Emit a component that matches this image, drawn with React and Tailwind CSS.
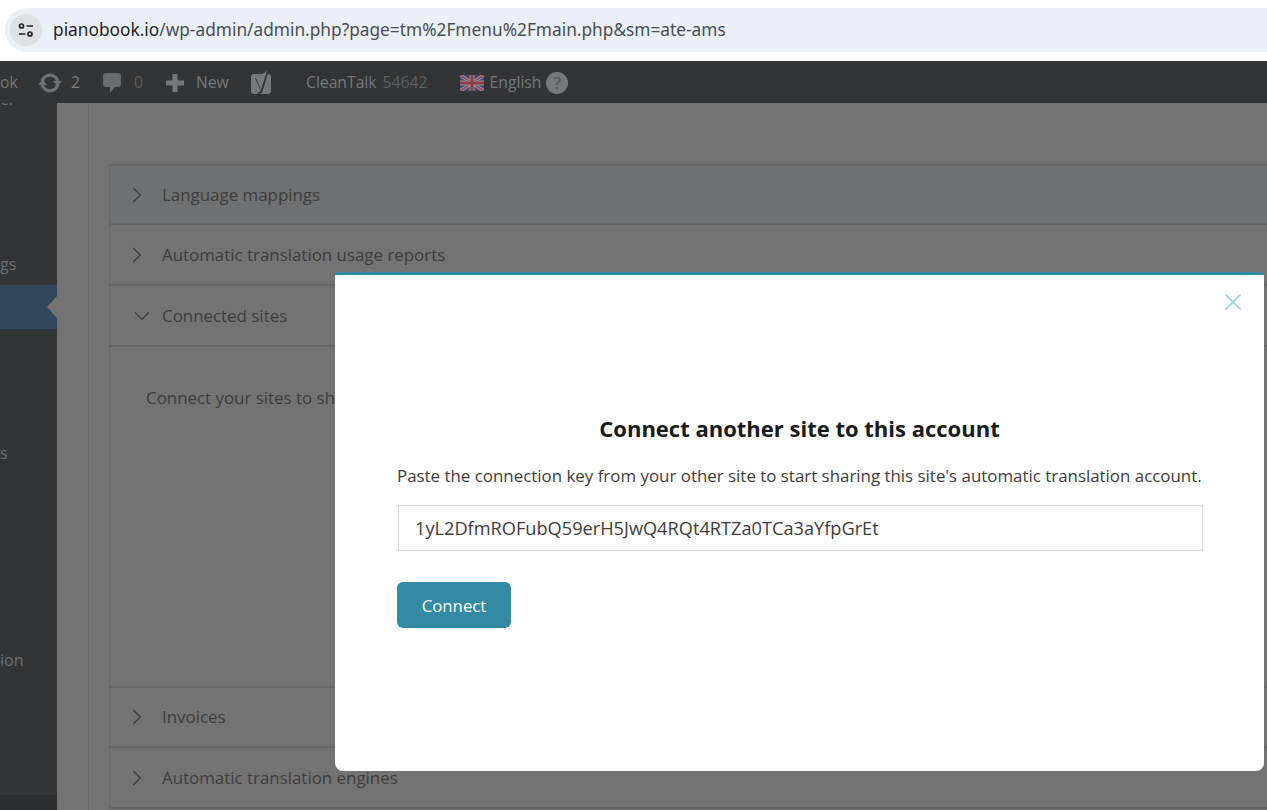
import React from 'react';
import { ChevronRight, ChevronDown, X } from 'lucide-react';

const font = "font-['Open_Sans',sans-serif]";

const SidebarItem = ({ label, className = '' }) => (
  <div className={`flex items-center overflow-hidden whitespace-nowrap text-[16px] text-[#6d6e70] ${className}`}>
    {label}
  </div>
);

const AccordionRow = ({ label, open, className = '' }) => (
  <div className={`flex items-center border-b-2 border-[#676767] text-[16.9px] text-[#3d3d3d] ${className}`}>
    <div className={`flex w-[52px] justify-start ${open ? 'pl-[19px]' : 'pl-[14px]'}`}>
      {open ? (
        <ChevronDown className="h-[26px] w-[26px] text-[#3f3f3f]" strokeWidth={1.2} />
      ) : (
        <ChevronRight className="h-[26px] w-[26px] text-[#3f3f3f]" strokeWidth={1.2} />
      )}
    </div>
    <span>{label}</span>
  </div>
);

const Flag = () => (
  <svg width="24" height="16" viewBox="0 0 24 16" className="mr-[6px]">
    <rect width="24" height="16" fill="#3f4a6b" />
    <path d="M0 0L24 16M24 0L0 16" stroke="#9a8f96" strokeWidth="3.4" />
    <path d="M0 0L24 16M24 0L0 16" stroke="#8c3f4c" strokeWidth="1.2" />
    <path d="M12 0V16M0 8H24" stroke="#9a8f96" strokeWidth="5" />
    <path d="M12 0V16M0 8H24" stroke="#8c3f4c" strokeWidth="3" />
  </svg>
);

const Refresh = () => (
  <svg width="24" height="20" viewBox="0 0 24 20" fill="none" stroke="#6f7072" strokeWidth="3.4">
    <path d="M4.300 8A8 8 0 0 1 19.700 8" />
    <path d="M19.700 12A8 8 0 0 1 4.300 12" />
    <path d="M15 8h9l-4.500 5.500z" fill="#6f7072" stroke="none" />
    <path d="M0 12h9L4.500 6.500z" fill="#6f7072" stroke="none" />
  </svg>
);

const Bubble = () => (
  <svg width="20" height="22" viewBox="0 0 20 22" fill="#6a6b6d">
    <path d="M4 1h12a3 3 0 0 1 3 3v8a3 3 0 0 1-3 3h-3l-5 6v-6H4a3 3 0 0 1-3-3V4a3 3 0 0 1 3-3z" />
  </svg>
);

const PlusIcon = () => (
  <svg width="20" height="20" viewBox="0 0 20 20" fill="#77787a">
    <path d="M7.500 1h5v6.500H19v5h-6.500V19h-5v-6.500H1v-5h6.500z" />
  </svg>
);

const Yoast = () => (
  <svg width="24" height="26" viewBox="0 0 24 26">
    <rect x="1" y="4" width="20" height="20" rx="3" fill="#77787a" />
    <path d="M16 0l3 0-7 23-5 2 1-3 2-3-5-11h4l3 7z" fill="#333435" />
    <path d="M17 1l-6.500 20-3 2.500 1-3 2-2.500L6 8" fill="#77787a" />
  </svg>
);

const SiteSettingsIcon = () => (
  <svg width="18" height="18" viewBox="0 0 18 18" fill="none" stroke="#1f2328" strokeWidth="1.7">
    <circle cx="4.500" cy="5" r="2" />
    <path d="M9.500 5H16M2 13h6.500" />
    <circle cx="13" cy="13" r="2" />
  </svg>
);

export default function App() {
  return (
    <div className={`relative h-[810px] w-[1267px] overflow-hidden bg-[#737373] ${font}`}>
      {/* Browser chrome */}
      <div className="flex h-[61px] items-start bg-white pl-[5px] pt-[8px]">
        <div className="flex h-[44px] flex-1 items-center rounded-l-[22px] bg-[#ebf0f9] pl-[5px] font-['Noto_Sans',sans-serif] text-[17.3px] text-[#4a4e53]">
          <div className="mr-[11px] flex h-[32px] w-[32px] items-center justify-center rounded-full bg-[#dee1e7]">
            <SiteSettingsIcon />
          </div>
          <span><span className="text-[#1f2328]">pianobook.io</span>/wp-admin/admin.php?page=tm%2Fmenu%2Fmain.php&amp;sm=ate-ams</span>
        </div>
      </div>

      {/* Admin bar */}
      <div className="flex h-[42px] items-center bg-[#333435] pt-[1px] text-[15.7px] text-[#77787a]">
        <span className="w-[38px]">ok</span>
        <Refresh />
        <span className="ml-[9px] w-[31px] text-[#7b7c7e]">2</span>
        <Bubble />
        <span className="ml-[12px] w-[31px] text-[#5d5e60]">0</span>
        <PlusIcon />
        <span className="ml-[11px] w-[54px]">New</span>
        <Yoast />
        <span className="ml-[32px]">CleanTalk</span>
        <span className="ml-[6px] w-[77px] text-[#5d5e60]">54642</span>
        <Flag />
        <span>English</span>
        <span className="ml-[5px] flex h-[22px] w-[22px] items-center justify-center rounded-full bg-[#77787a] text-[17px] font-semibold text-[#58595b]">?</span>
      </div>

      <div className="flex h-[707px]">
        {/* Sidebar */}
        <div className="flex w-[57px] shrink-0 flex-col bg-[#333435]">
          <SidebarItem label="el" className="h-[8px] items-end" />
          <SidebarItem label="gs" className="mt-[140px] h-[26px]" />
          <div className="relative mt-[8px] h-[44px] bg-[#30475c]">
            <div className="absolute right-0 top-[11px] h-0 w-0 border-y-[11px] border-r-[10px] border-y-transparent border-r-[#737373]" />
          </div>
          <SidebarItem label="s" className="mt-[111px] h-[26px]" />
          <SidebarItem label="ion" className="mt-[181px] h-[26px]" />
          <div className="mt-auto h-[15px] bg-[#2d2e2f]" />
        </div>

        {/* Main content */}
        <div className="flex-1 pl-[31px]">
          <div className="h-full border-l border-[#686868] pl-[20px] pt-[61px]">
            <div className="border-l border-t-2 border-[#686868]">
              <AccordionRow label="Language mappings" className="h-[59px] bg-[#6f7071] pt-[1px]" />
              <AccordionRow label="Automatic translation usage reports" className="h-[61px] pt-[1px]" />
              <AccordionRow label="Connected sites" open className="h-[61px]" />
              <div className="h-[341px] border-b-2 border-[#676767] pl-[36px] pt-[38px] text-[16.9px] text-[#3d3d3d]">
                Connect your sites to share
              </div>
              <AccordionRow label="Invoices" className="h-[60px]" />
              <AccordionRow label="Automatic translation engines" className="h-[61px] pt-[1px]" />
            </div>
          </div>
        </div>
      </div>

      {/* Modal */}
      <div className="absolute left-[335px] top-[272px] h-[499px] w-[929px] rounded-b-[8px] rounded-t-[3px] border-t-[3px] border-[#348aa3] bg-white px-[62px]">
        <button className="absolute right-[17px] top-[13px] text-[#b0d5de]">
          <X className="h-[28px] w-[28px]" strokeWidth={1.7} />
        </button>
        <h2 className="mt-[138px] text-center text-[22px] font-bold leading-[30px] text-[#1a1a1a]">
          Connect another site to this account
        </h2>
        <p className="mt-[21px] whitespace-nowrap text-[16.9px] leading-[24px] text-[#3f3c3b]">
          Paste the connection key from your other site to start sharing this site's automatic translation account.
        </p>
        <div className="ml-px mt-[17px] flex h-[46px] w-[805px] items-center border border-[#dddddd] pl-[16px] pt-[1px] text-[18.2px] text-[#3f3c3b]">
          1yL2DfmROFubQ59erH5JwQ4RQt4RTZa0TCa3aYfpGrEt
        </div>
        <button className="mt-[31px] h-[46px] w-[114px] rounded-[6px] bg-[#348aa3] pt-[1px] text-[16.8px] text-white">
          Connect
        </button>
      </div>
    </div>
  );
}
